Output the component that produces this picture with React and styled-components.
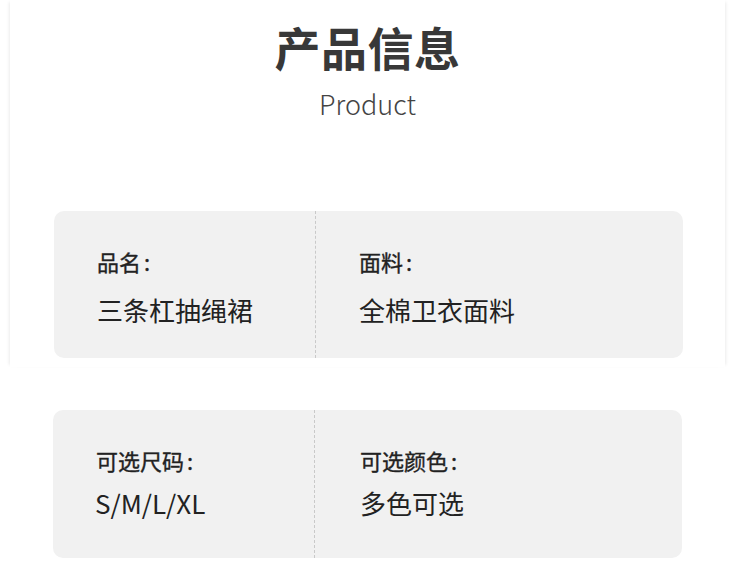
import React from 'react';
import styled, { createGlobalStyle } from 'styled-components';

const GlobalStyle = createGlobalStyle`
  html, body {
    margin: 0;
    padding: 0;
    background: #ffffff;
  }
  body {
    font-family: "Noto Sans CJK SC", "Noto Sans", sans-serif;
    color: #222;
  }
`;

const Page = styled.div`
  width: 750px;
  height: 587px;
  overflow: hidden;
  background: #fff;
`;

// top slice: white sheet with a faint shadow down its two sides
const Sheet = styled.section`
  width: 715px;
  height: 367px;
  margin-left: 10px;
  background: #fff;
  box-shadow: -3px 0 3px -2px rgba(0, 0, 0, 0.08), 3px 0 3px -2px rgba(0, 0, 0, 0.08);
  display: flex;
  flex-direction: column;
  padding-top: 15px;
  box-sizing: border-box;
`;

const Lower = styled.section`
  height: 220px;
  padding-top: 43px;
  box-sizing: border-box;
`;

const Title = styled.h1`
  margin: 0;
  text-align: center;
  font-size: 46px;
  line-height: 62px;
  font-weight: 700;
  color: #383838;
  letter-spacing: 0.5px;
`;

const Subtitle = styled.div`
  text-align: center;
  font-size: 27px;
  line-height: 36px;
  font-weight: 300;
  color: #444;
  margin-top: 9px;
`;

const Card = styled.div`
  display: flex;
  width: 629px;
  height: ${p => p.$height}px;
  margin-left: ${p => p.$left}px;
  margin-top: ${p => p.$top || 0}px;
  background: #f1f1f1;
  border-radius: 10px;
`;

const Cell = styled.div`
  width: ${p => (p.$first ? '262px' : 'auto')};
  flex: ${p => (p.$first ? 'none' : '1')};
  padding: ${p => (p.$first ? '37px 0 0 43px' : '37px 0 0 43px')};
  box-sizing: border-box;
  border-right: ${p => (p.$first ? '1px dashed #c9c9c9' : 'none')};
`;

const Label = styled.div`
  font-size: 22px;
  line-height: 26px;
  font-weight: 400;
  -webkit-text-stroke: 0.35px #222;
  color: #222;
  margin-left: ${p => p.$shift || 0}px;
`;

const Colon = styled.span`
  margin-left: 3px;
`;

const Value = styled.div`
  font-size: 26px;
  line-height: 30px;
  font-weight: 400;
  color: #222;
  margin-top: ${p => (p.$tight ? 15 : 21)}px;
  margin-left: ${p => p.$shift || 0}px;
`;

const InfoCard = ({ left, top, height, tight, items }) => (
  <Card $left={left} $top={top} $height={height}>
    {items.map((it, i) => (
      <Cell key={i} $first={i === 0}>
        <Label $shift={it.labelShift}>
          {it.label}
          <Colon>:</Colon>
        </Label>
        <Value $tight={tight} $shift={it.valueShift}>{it.value}</Value>
      </Cell>
    ))}
  </Card>
);

export default function App() {
  return (
    <Page>
      <GlobalStyle />
      <Sheet>
        <Title>产品信息</Title>
        <Subtitle>Product</Subtitle>
        <InfoCard
          left={44}
          top={89}
          height={147}
          items={[
            { label: '品名', value: '三条杠抽绳裙' },
            { label: '面料', value: '全棉卫衣面料' },
          ]}
        />
      </Sheet>
      <Lower>
        <InfoCard
          left={53}
          height={148}
          tight
          items={[
            { label: '可选尺码', value: 'S/M/L/XL', valueShift: -1 },
            { label: '可选颜色', value: '多色可选', labelShift: 2, valueShift: 2 },
          ]}
        />
      </Lower>
    </Page>
  );
}
